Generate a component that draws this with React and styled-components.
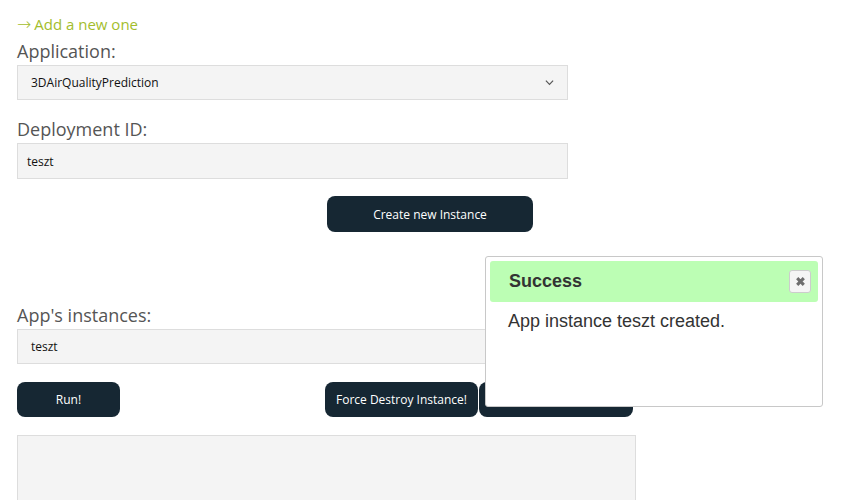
import styled, { createGlobalStyle } from "styled-components"

const Global = createGlobalStyle`
    body {
        margin: 0;
        background: #fff;
        font-family: "Open Sans", "Noto Sans", sans-serif;
    }
`
const Page = styled.div`
    position: relative;
    padding: 12px 0 0 17px;
    height: 488px;
    overflow: hidden;
`
const AddLink = styled.a`
    display: block;
    height: 25px;
    color: #a3bd2c;
    font-size: 15px;
    line-height: 25px;
    text-decoration: none;
`
const Arrow = styled.span`
    font-family: "DejaVu Sans", sans-serif;
    font-size: 17px;
    font-weight: 200;
    line-height: 0;
    margin-right: 3px;
`
const Label = styled.label`
    display: block;
    color: #555;
    font-size: 18px;
    line-height: 28px;
    margin-top: ${p => p.$gap || 0}px;
`
const Field = styled.div`
    box-sizing: border-box;
    width: ${p => p.$width || 551}px;
    height: ${p => p.$height || 35}px;
    background: #f4f4f4;
    border: 1px solid #ddd;
    color: #111;
    font-size: 12px;
    display: flex;
    align-items: center;
    justify-content: space-between;
    padding: 0 ${p => p.$pad || 9}px 0 ${p => p.$pad || 9}px;
`
const Chevron = styled.svg`
    width: 9px;
    height: 9px;
`
const Button = styled.button`
    box-sizing: border-box;
    height: ${p => p.$height || 35}px;
    width: ${p => p.$width}px;
    background: #162733;
    color: #fff;
    border: none;
    border-radius: 8px;
    font-family: "Open Sans", "Noto Sans", sans-serif;
    font-size: 12px;
    padding: 0;
    margin-left: ${p => p.$left || 0}px;
    flex-shrink: 0;
`
const CreateRow = styled.div`
    margin-top: 17px;
    padding-left: 310px;
`
const ButtonRow = styled.div`
    display: flex;
    margin-top: 18px;
`
const TextArea = styled.div`
    box-sizing: border-box;
    width: 619px;
    height: 80px;
    margin-top: 18px;
    background: #f4f4f4;
    border: 1px solid #ddd;
`
const Toast = styled.div`
    position: absolute;
    left: 485px;
    top: 256px;
    box-sizing: border-box;
    width: 338px;
    height: 151px;
    background: #fff;
    border: 1px solid #c8c8c8;
    border-radius: 3px;
    padding: 4px;
    font-family: "Liberation Sans", Arial, sans-serif;
`
const ToastHeader = styled.div`
    height: 41px;
    background: #bcfeb4;
    border-radius: 3px;
    display: flex;
    align-items: center;
    justify-content: space-between;
    padding: 0 7px 0 19px;
    font-size: 18px;
    font-weight: bold;
    color: #333;
`
const CloseButton = styled.span`
    box-sizing: border-box;
    width: 22px;
    height: 23px;
    background: #f5f5f5;
    border: 1px solid #ccc;
    border-radius: 3px;
    display: flex;
    align-items: center;
    justify-content: center;
`
const ToastBody = styled.div`
    padding: 9px 18px;
    font-size: 18px;
    color: #333;
`

export default function App() {
    return (
        <>
            <Global />
            <Page>
                <AddLink><Arrow>→</Arrow>Add a new one</AddLink>
                <Label>Application:</Label>
                <Field $pad={13}>
                    3DAirQualityPrediction
                    <Chevron viewBox="0 0 10 10">
                        <path d="M1 3l4 4 4-4" fill="none" stroke="#555" strokeWidth="1.3" />
                    </Chevron>
                </Field>
                <Label $gap={15}>Deployment ID:</Label>
                <Field $height={36}>teszt</Field>
                <CreateRow>
                    <Button $width={206} $height={36}>Create new Instance</Button>
                </CreateRow>
                <Label $gap={69}>App's instances:</Label>
                <Field $pad={13}>teszt</Field>
                <ButtonRow>
                    <Button $width={103}>Run!</Button>
                    <Button $width={153} $left={205}>Force Destroy Instance!</Button>
                    <Button $width={154} $left={1}>Destroy Instance!</Button>
                </ButtonRow>
                <TextArea />
                <Toast>
                    <ToastHeader>
                        Success
                        <CloseButton>
                            <svg width="11" height="11" viewBox="0 0 10 10">
                                <path d="M2 2l6 6M8 2l-6 6" stroke="#6e6e6e" strokeWidth="2.8" />
                            </svg>
                        </CloseButton>
                    </ToastHeader>
                    <ToastBody>App instance teszt created.</ToastBody>
                </Toast>
            </Page>
        </>
    )
}
